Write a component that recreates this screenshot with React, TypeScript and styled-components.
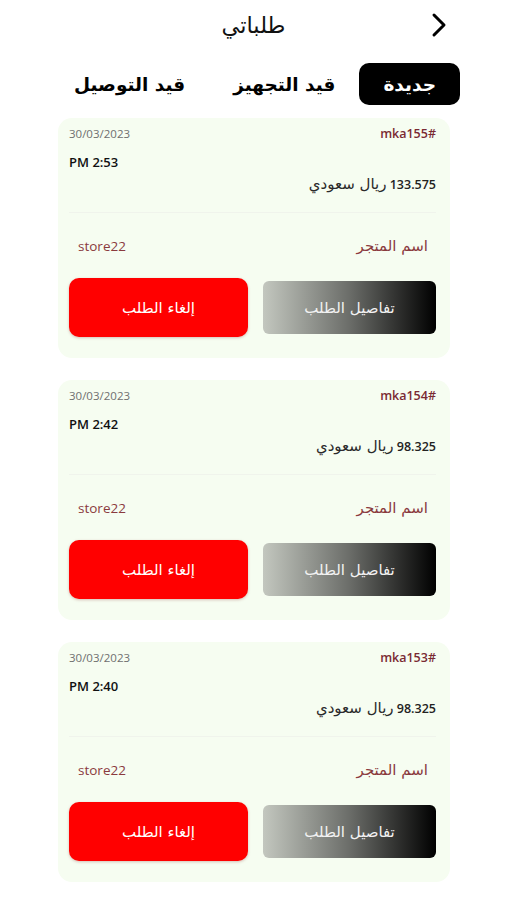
import styled, { createGlobalStyle } from 'styled-components';

const GlobalStyle = createGlobalStyle`
  html, body {
    margin: 0;
    padding: 0;
    background: #ffffff;
  }
  body {
    font-family: "Open Sans", "DejaVu Sans", sans-serif;
    color: #000;
  }
`

const Page = styled.div`
  direction: rtl;
  width: 507px;
  min-height: 900px;
  display: flex;
  flex-direction: column;
`

const Header = styled.header`
  position: relative;
  height: 50px;
  display: flex;
  align-items: center;
  justify-content: center;
`

const Title = styled.h1`
  margin: 0;
  font-family: "DejaVu Sans", sans-serif;
  font-size: 22.5px;
  font-weight: 400;
  color: #111;
`

const BackButton = styled.button`
  position: absolute;
  right: 57px;
  top: 12px;
  width: 22px;
  height: 26px;
  padding: 0;
  border: none;
  background: none;
  display: flex;
  align-items: center;
  justify-content: center;
`

const Tabs = styled.nav`
  display: flex;
  padding: 13px 47px 0 0;
  height: 42px;
`

const Tab = styled.div<{ $active?: boolean }>`
  padding: 0 24px;
  display: flex;
  align-items: center;
  border-radius: 10px;
  font-family: "DejaVu Sans", sans-serif;
  font-weight: 700;
  font-size: 18.5px;
  background: ${p => (p.$active ? '#000' : 'transparent')};
  color: ${p => (p.$active ? '#fff' : '#000')};
`

const List = styled.main`
  display: flex;
  flex-direction: column;
  gap: 22px;
  padding: 13px 57px 0 58px;
`

const Card = styled.section`
  background: #f6fdf1;
  border-radius: 14px;
  padding: 7px 14px 21px 11px;
  display: flex;
  flex-direction: column;
`

const TopRow = styled.div`
  display: flex;
  justify-content: space-between;
  align-items: center;
  height: 16px;
`

const OrderNo = styled.span`
  font-size: 12.5px;
  font-weight: 600;
  color: #7a2a33;
`

const DateText = styled.span`
  font-size: 11.5px;
  color: #6f6f6f;
`

const TimeText = styled.div`
  margin-top: 12px;
  line-height: 18px;
  font-size: 13px;
  font-weight: 600;
  text-align: left;
  color: #111;
`

const Price = styled.div`
  margin-top: 4px;
  line-height: 18px;
  font-size: 12.5px;
  color: #222;
`

const Amount = styled.span`
  font-weight: 600;
`

const Currency = styled.span`
  font-family: "DejaVu Sans", sans-serif;
  font-size: 15px;
  line-height: 18px;
  color: #2a2a2a;
`

const Divider = styled.hr`
  margin: 18px 0 0;
  border: none;
  border-top: 1px solid #f0f4ec;
`

const StoreRow = styled.div`
  margin-top: 23px;
  padding: 0 8px 0 9px;
  display: flex;
  justify-content: space-between;
  align-items: center;
  line-height: 20px;
  color: #8a3a3e;
`

const StoreLabel = styled.span`
  font-family: "DejaVu Sans", sans-serif;
  font-size: 15px;
`

const StoreName = styled.span`
  font-size: 13.5px;
`

const Actions = styled.div`
  margin-top: 22px;
  display: flex;
  align-items: center;
  gap: 15px;
`

const ActionButton = styled.button<{ $variant: 'details' | 'cancel' }>`
  border: none;
  font-family: "DejaVu Sans", sans-serif;
  font-size: 15px;
  color: ${p => (p.$variant === 'details' ? '#f2f2f2' : '#fff')};
  cursor: pointer;
  width: ${p => (p.$variant === 'details' ? '173px' : '179px')};
  height: ${p => (p.$variant === 'details' ? '53px' : '59px')};
  border-radius: ${p => (p.$variant === 'details' ? '6px' : '10px')};
  background: ${p =>
    p.$variant === 'details'
      ? 'linear-gradient(to right, #c3c7bf 0%, #6b6d69 50%, #000 100%)'
      : '#ff0000'};
  box-shadow: ${p => (p.$variant === 'cancel' ? '0 1px 3px rgba(120,0,0,0.25)' : 'none')};
`

interface Order {
  id: string
  date: string
  time: string
  price: string
  store: string
}

const orders: Order[] = [
  { id: '#mka155', date: '30/03/2023', time: '2:53 PM', price: '133.575', store: 'store22' },
  { id: '#mka154', date: '30/03/2023', time: '2:42 PM', price: '98.325', store: 'store22' },
  { id: '#mka153', date: '30/03/2023', time: '2:40 PM', price: '98.325', store: 'store22' },
]

const OrderCard = ({ order }: { order: Order }) => (
  <Card>
    <TopRow>
      <OrderNo>{order.id}</OrderNo>
      <DateText>{order.date}</DateText>
    </TopRow>
    <TimeText>{order.time}</TimeText>
    <Price>
      <Amount>{order.price}</Amount> <Currency>ريال سعودي</Currency>
    </Price>
    <Divider />
    <StoreRow>
      <StoreLabel>اسم المتجر</StoreLabel>
      <StoreName>{order.store}</StoreName>
    </StoreRow>
    <Actions>
      <ActionButton $variant="details">تفاصيل الطلب</ActionButton>
      <ActionButton $variant="cancel">إلغاء الطلب</ActionButton>
    </Actions>
  </Card>
)

export default function App() {
  return (
    <>
      <GlobalStyle />
      <Page>
        <Header>
          <Title>طلباتي</Title>
          <BackButton aria-label="رجوع">
            <svg width="16" height="26" viewBox="0 0 16 26" fill="none">
              <path d="M3 3 L13 13 L3 23" stroke="#000" strokeWidth="3" strokeLinecap="round" strokeLinejoin="round" />
            </svg>
          </BackButton>
        </Header>
        <Tabs>
          <Tab $active>جديدة</Tab>
          <Tab>قيد التجهيز</Tab>
          <Tab>قيد التوصيل</Tab>
        </Tabs>
        <List>
          {orders.map(o => (
            <OrderCard key={o.id} order={o} />
          ))}
        </List>
      </Page>
    </>
  )
}
